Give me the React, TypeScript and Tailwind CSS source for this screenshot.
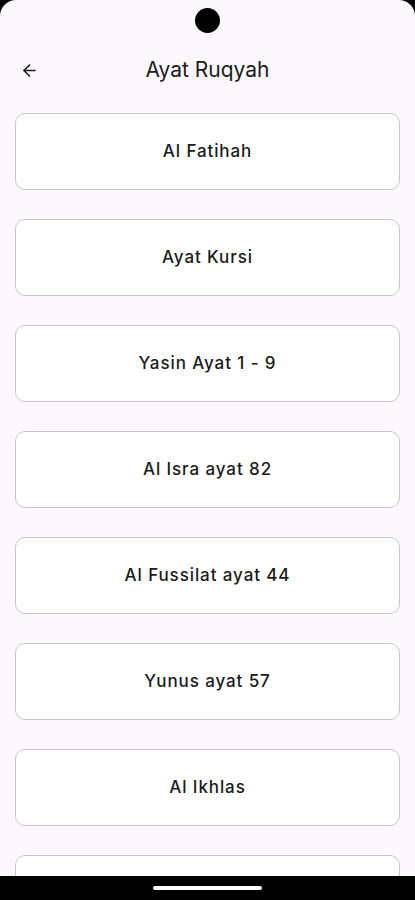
import React from "react";
import { ArrowLeft } from "lucide-react";

const surahs = [
  "Al Fatihah",
  "Ayat Kursi",
  "Yasin Ayat 1 - 9",
  "Al Isra ayat 82",
  "Al Fussilat ayat 44",
  "Yunus ayat 57",
  "Al Ikhlas",
  "",
];

export default function App() {
  return (
    <div className="w-full h-[900px] bg-black overflow-hidden" style={{ fontFamily: "Inter, 'Noto Sans', sans-serif" }}>
      <div className="h-full flex flex-col bg-[#fdf8fd] rounded-t-[16px] overflow-hidden">
        {/* status bar with camera */}
        <div className="h-[40px] shrink-0 flex justify-center pt-[8px]">
          <div className="w-[25px] h-[25px] rounded-full bg-black" />
        </div>

        {/* app bar */}
        <div className="h-[60px] shrink-0 flex items-center relative">
          <button className="w-[58px] h-full flex items-center justify-center text-[#1d1b20]">
            <ArrowLeft size={19} strokeWidth={2} />
          </button>
          <h1 className="absolute left-0 right-0 text-center text-[21px] text-[#1d1b20] pointer-events-none">
            Ayat Ruqyah
          </h1>
        </div>

        {/* list */}
        <div className="flex-1 overflow-hidden px-[15px] pt-[13px] flex flex-col gap-[29px]">
          {surahs.map((s, i) => (
            <div
              key={i}
              className="h-[77px] shrink-0 bg-white border-[1.5px] border-[#c8c5ca] rounded-[10px] flex items-center justify-center"
            >
              <span className="text-[17px] font-medium tracking-[0.9px] text-[#1a1a1a]">{s}</span>
            </div>
          ))}
        </div>

        {/* nav bar */}
        <div className="h-[24px] shrink-0 bg-black flex items-center justify-center">
          <div className="w-[109px] h-[4px] rounded-full bg-white" />
        </div>
      </div>
    </div>
  );
}
